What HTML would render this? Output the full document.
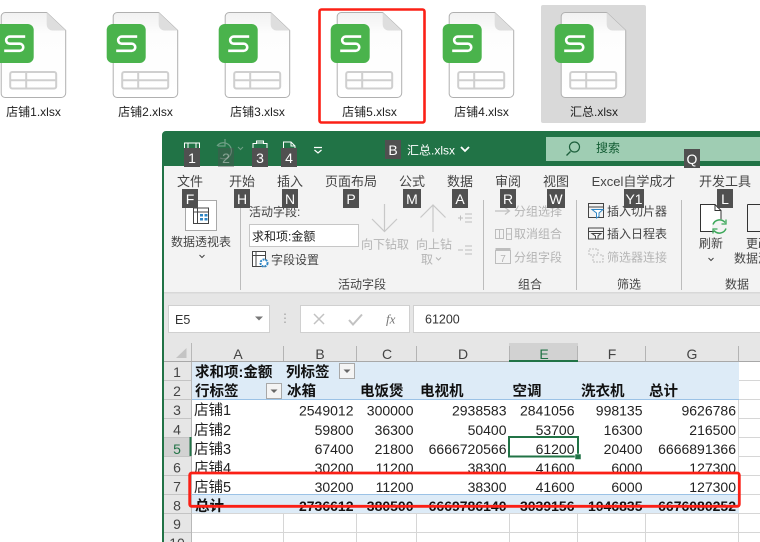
<!DOCTYPE html>
<html><head><meta charset="utf-8"><style>
html,body{margin:0;padding:0;background:#fff;width:760px;height:542px;overflow:hidden}
svg{display:block;font-family:"Liberation Sans","Noto Sans CJK SC",sans-serif}
.f{font-size:12px;fill:#222;text-anchor:middle}
.t{font-size:13px;fill:#444;text-anchor:middle}
.r{font-size:12px;fill:#444}
.g{font-size:12px;fill:#b4b4b4}
.k{font-size:14px;fill:#fff;text-anchor:middle}
.h{font-size:14px;fill:#444;text-anchor:middle}
.c{font-size:14.5px;fill:#222}
.n{font-size:14px;fill:#222;text-anchor:end}
.b{font-size:14.5px;fill:#111;font-weight:bold}
.bn{font-size:14px;fill:#111;font-weight:bold;text-anchor:end}
</style></head><body>
<svg width="760" height="542" viewBox="0 0 760 542" xmlns="http://www.w3.org/2000/svg">
<defs>
<linearGradient id="dg" x1="0" y1="0" x2="0" y2="1"><stop offset="0" stop-color="#f1f1f1"/><stop offset=".25" stop-color="#fdfdfd"/><stop offset="1" stop-color="#fff"/></linearGradient>
<symbol id="doc" overflow="visible" width="65" height="86" viewBox="0 0 65 86">
<path d="M4.500.5H46L65 18.500V81a4.500 4.500 0 0 1-4.500 4.500H4.500A4 4 0 0 1 .5 81V4.500A4 4 0 0 1 4.500.5Z" fill="url(#dg)" stroke="#b0b0b0" stroke-width="1"/>
<path d="M46 .5L65 18.500H52a6 6 0 0 1-6-6Z" fill="#dedede"/>
<rect x="9.500" y="60" width="46" height="16.500" rx="2" fill="none" stroke="#cfcfcf" stroke-width="2"/>
<path d="M9.500 68.300H55.500M25.500 60V76.500" stroke="#cfcfcf" stroke-width="2" fill="none"/>
<rect x="-6" y="12" width="39" height="39" rx="6" fill="#4ab34c"/>
<path d="M24.500 24.600H9a3.550 3.550 0 0 0 0 7.100H19a3.550 3.550 0 0 1 0 7.100H3.500" fill="none" stroke="#fff" stroke-width="2.600"/>
</symbol>
</defs>

<rect width="760" height="542" fill="#fff"/>
<rect x="541" y="5" width="105" height="118" rx="2" fill="#d9d9d9"/>
<use href="#doc" x="0.700" y="12" width="65" height="86"/>
<use href="#doc" x="112.700" y="12" width="65" height="86"/>
<use href="#doc" x="224.700" y="12" width="65" height="86"/>
<use href="#doc" x="336.700" y="12" width="65" height="86"/>
<use href="#doc" x="448.700" y="12" width="65" height="86"/>
<use href="#doc" x="560.700" y="12" width="65" height="86"/>
<text class="f" x="33.500" y="116">店铺1.xlsx</text>
<text class="f" x="145.500" y="116">店铺2.xlsx</text>
<text class="f" x="257.500" y="116">店铺3.xlsx</text>
<text class="f" x="369.500" y="116">店铺5.xlsx</text>
<text class="f" x="481.500" y="116">店铺4.xlsx</text>
<text class="f" x="594" y="116">汇总.xlsx</text>

<!-- window -->
<path d="M162 542V135a4 4 0 0 1 4-4H760V542Z" fill="#fff"/>
<path d="M162 542V135a4 4 0 0 1 4-4H760V167H164V542Z" fill="#217346"/>
<rect x="164" y="166" width="596" height="127" fill="#f3f3f3"/>
<rect x="164" y="293" width="596" height="50" fill="#e6e6e6"/>
<rect x="164" y="292" width="596" height="1.500" fill="#d8d8d8"/>

<!-- QAT -->
<path d="M184.500 148V143H199.500V148M188 143V148M196 143V148" fill="none" stroke="#fff"/>
<path d="M217 146a8 8 0 1 1 3 12M225 139V146H218" fill="none" stroke="#6f9f86" stroke-width="1.200"/>
<path d="M238 147l2.500 2.500 2.500-2.500" fill="none" stroke="#6f9f86"/>
<path d="M253 148V143.500H256.500V143H263.500V143.500H267V148M256.500 143V141H263.500V143" fill="none" stroke="#fff"/>
<path d="M283.500 148V142H291L295 146V148M291 142V146H295" fill="none" stroke="#fff"/>
<path d="M314 147.500H322M314.500 150l3.500 3 3.500-3" fill="none" stroke="#fff" stroke-width="1.200"/>

<text x="407" y="154.500" font-size="12" fill="#fff">汇总.xlsx</text>
<path d="M461 147l4 4 4-4" fill="none" stroke="#fff" stroke-width="1.800"/>
<rect x="546" y="137" width="214" height="24" fill="#9fcdb3"/>
<circle cx="574.500" cy="147" r="5" fill="none" stroke="#1d5f3c" stroke-width="1.200"/>
<path d="M570.500 151.500L566.500 155.500" stroke="#1d5f3c" stroke-width="1.300"/>
<text x="596" y="152" font-size="12" fill="#125c33">搜索</text>

<!-- Tabs -->
<text class="t" x="190" y="186">文件</text>
<text class="t" x="242" y="186">开始</text>
<text class="t" x="290" y="186">插入</text>
<text class="t" x="351" y="186">页面布局</text>
<text class="t" x="412" y="186">公式</text>
<text class="t" x="460" y="186">数据</text>
<text class="t" x="508" y="186">审阅</text>
<text class="t" x="556" y="186">视图</text>
<text class="t" x="633.500" y="186">Excel自学成才</text>
<text class="t" x="725" y="186">开发工具</text>

<!-- Ribbon: pivot -->
<rect x="185.500" y="200.500" width="31" height="30" fill="#fff" stroke="#a8a8a8"/>
<rect x="193.500" y="208" width="15" height="15.500" fill="#fff" stroke="#444"/>
<path d="M193.500 212H208.500M197.500 208V223.500" stroke="#444" fill="none"/>
<rect x="200" y="214" width="3" height="2.500" fill="#2f86c5"/><rect x="204.500" y="214" width="3" height="2.500" fill="#2f86c5"/><rect x="200" y="218" width="3" height="2.500" fill="#2f86c5"/><rect x="204.500" y="218" width="3" height="2.500" fill="#2f86c5"/>
<text class="r" x="171" y="246">数据透视表</text>
<path d="M199.500 255l2.500 2.500 2.500-2.500" fill="none" stroke="#444"/>
<path d="M240.500 200V290M483.500 200V290M576.500 200V290M681.500 200V290" stroke="#bcbcbc" fill="none"/>

<text class="r" x="249" y="216" fill="#555">活动字段:</text>
<rect x="249.500" y="224.500" width="109" height="22" fill="#fff" stroke="#c6c6c6"/>
<text x="252" y="240.500" font-size="12" fill="#222">求和项:金额</text>
<rect x="252.500" y="251.500" width="13" height="15" fill="#fff" stroke="#444"/>
<path d="M252.500 255.500H265.500M256 251.500V266.500" stroke="#444" fill="none"/>
<circle cx="264" cy="263" r="3.500" fill="#fff" stroke="#2f86c5" stroke-width="2" stroke-dasharray="2 1"/>
<text class="r" x="271" y="264">字段设置</text>

<path d="M384.500 204V231M372 219L384.500 231.500L397 219" fill="none" stroke="#c8c8c8" stroke-width="1.200"/>
<path d="M433 232V205M420.500 217.500L433 205L445.500 217.500" fill="none" stroke="#c8c8c8" stroke-width="1.200"/>
<text class="g" x="361" y="248.500">向下钻取</text>
<text class="g" x="416" y="248.500">向上钻</text>
<text class="g" x="421" y="263.500">取</text>
<path d="M436 257.500l2.500 2.500 2.500-2.500" fill="none" stroke="#b4b4b4"/>
<path d="M458 218H463M460.500 215.500V220.500M465 214H472M465 218H472M465 222H472M458 250H463M465 246H472M465 250H472M465 254H472" stroke="#bdbdbd" fill="none"/>
<text class="r" x="338" y="288.500">活动字段</text>

<!-- group -->
<path d="M495 211H509M505 207.500L509.500 211L505 214.500" fill="none" stroke="#c0c0c0" stroke-width="1.200"/>
<text class="g" x="514" y="215.500">分组选择</text>
<path d="M495.500 229.500H503.500V238.500H495.500ZM506.500 228.500H511.500V239.500H506.500ZM506.500 234H511.500M499.500 229.500V238.500" fill="none" stroke="#bdbdbd"/>
<text class="g" x="514" y="238">取消组合</text>
<rect x="495.500" y="250.500" width="15" height="13" fill="none" stroke="#bdbdbd"/>
<path d="M495.500 249H510.500" stroke="#bdbdbd" stroke-width="2"/>
<text x="503" y="262" font-size="10" fill="#b4b4b4" text-anchor="middle">7</text>
<text class="g" x="514" y="261.500">分组字段</text>
<text class="r" x="518" y="288.500">组合</text>

<!-- filter -->
<path d="M588.500 203.500H603.500V217.500H588.500ZM588.500 207H603.500" fill="none" stroke="#444"/>
<path d="M592 209.500H603L599 213V216.500L596.500 218V213Z" fill="#fff" stroke="#2f86c5"/>
<text class="r" x="607" y="215.500">插入切片器</text>
<path d="M588.500 228H603.500V239H588.500ZM588.500 231.500H603.500" fill="none" stroke="#444"/>
<path d="M592 233.500H601L598 236V239H595.500V236Z" fill="#fff" stroke="#444"/>
<text class="r" x="607" y="238">插入日程表</text>
<path d="M589 249H598V255H589ZM593 256V262H603V255H599" fill="none" stroke="#bdbdbd" stroke-dasharray="2 1"/>
<text class="g" x="607" y="261.500">筛选器连接</text>
<text class="r" x="617" y="288.500">筛选</text>

<!-- data -->
<path d="M700.500 204.500H715L721 210.500V231.500H700.500Z" fill="#fff" stroke="#333"/>
<path d="M715 204.500V210.500H721" fill="none" stroke="#333"/>
<circle cx="719.500" cy="226.500" r="7.500" fill="#f3f3f3"/>
<path d="M713 224.500A7 7 0 0 1 725 222.500M726 228.500A7 7 0 0 1 714 230.500" fill="none" stroke="#3da85a" stroke-width="1.500"/>
<path d="M726 219.500V224H721.500M713 233.500V229H717.500" fill="none" stroke="#3da85a" stroke-width="1.300"/>
<text class="r" x="699" y="247.500">刷新</text>
<path d="M708.500 258l2.500 2.500 2.500-2.500" fill="none" stroke="#444"/>
<path d="M747.500 204.500H760M747.500 204.500V231.500H760" fill="none" stroke="#333"/>
<text class="r" x="746" y="247.500">更改</text>
<text class="r" x="734" y="262.500">数据源</text>
<text class="r" x="725" y="288.500">数据</text>

<!-- formula bar -->
<rect x="168.500" y="305.500" width="101" height="27" fill="#fff" stroke="#d0d0d0"/>
<text x="175" y="324" font-size="12.500" fill="#333">E5</text>
<path d="M255 316.500H263L259 320.500Z" fill="#777"/>
<path d="M285 313.500V315M285 317.500V319M285 321.500V323" stroke="#aaa" stroke-width="1.500" fill="none"/>
<rect x="300.500" y="305.500" width="109" height="27" fill="#fff" stroke="#d0d0d0"/>
<path d="M314 314L324 324M324 314L314 324" stroke="#c2c2c2" stroke-width="1.500" fill="none"/>
<path d="M349 320L353 324.500L362 314.500" stroke="#c2c2c2" stroke-width="2" fill="none"/>
<text x="386" y="323.500" font-family="Liberation Serif,serif" font-style="italic" font-size="13" fill="#777">fx</text>
<rect x="413.500" y="305.500" width="350" height="27" fill="#fff" stroke="#d0d0d0"/>
<text x="425" y="323.500" font-size="12.500" fill="#333">61200</text>

<!-- sheet -->
<rect x="164" y="343" width="596" height="199" fill="#fff"/>
<rect x="164" y="343" width="596" height="19" fill="#e6e6e6"/>
<rect x="509" y="343" width="69" height="17" fill="#d2d2d2"/>
<path d="M186.500 348V358H176Z" fill="#c4c4c4"/>
<path d="M191.500 343V542" stroke="#b8b8b8" fill="none"/>
<rect x="164" y="362" width="27" height="180" fill="#e6e6e6"/>
<rect x="164" y="437" width="27" height="19" fill="#d2d2d2"/>
<path d="M283.500 346V361M356.500 346V361M416.500 346V361M509.500 346V361M577.500 346V361M645.500 346V361M738.500 346V361" stroke="#b4b4b4" fill="none"/>
<path d="M164 361.500H760" stroke="#a8a8a8" fill="none"/>
<path d="M164 380.500H191M164 399.500H191M164 418.500H191M164 437.500H191M164 456.500H191M164 475.500H191M164 494.500H191M164 513.500H191M164 532.500H191" stroke="#c4c4c4" fill="none"/>
<path d="M739 380.500H760M739 399.500H760M739 418.500H760M739 437.500H760M739 456.500H760M739 475.500H760M739 494.500H760M739 513.500H760M739 532.500H760M192 532.500H760M192 513.500H760M283.500 513V542M356.500 513V542M416.500 513V542M509.500 513V542M577.500 513V542M645.500 513V542M738.500 362V542" stroke="#d6d6d6" fill="none"/>
<rect x="509" y="360" width="69" height="2" fill="#217346"/>
<rect x="189.500" y="437" width="2" height="19" fill="#217346"/>

<text class="h" x="238" y="359">A</text><text class="h" x="320" y="359">B</text><text class="h" x="387" y="359">C</text><text class="h" x="463" y="359">D</text><text class="h" x="544" y="359" style="fill:#217346">E</text><text class="h" x="612" y="359">F</text><text class="h" x="692" y="359">G</text>
<text class="h" x="177" y="377">1</text><text class="h" x="177" y="396">2</text><text class="h" x="177" y="415">3</text><text class="h" x="177" y="434.500">4</text><text class="h" x="177" y="454" style="fill:#217346">5</text><text class="h" x="177" y="472.500">6</text><text class="h" x="177" y="491.500">7</text><text class="h" x="177" y="510.500">8</text><text class="h" x="177" y="529">9</text><text class="h" x="177" y="548">10</text>

<rect x="192" y="362" width="547" height="37" fill="#ddebf7"/>
<path d="M192 399.500H739" stroke="#9bc2e6" fill="none"/>
<text class="b" x="195" y="377">求和项:金额</text>
<text class="b" x="286" y="377">列标签</text>
<rect x="339.500" y="363.500" width="15" height="15" fill="#f4f4f4" stroke="#a8a8a8"/>
<path d="M343.500 369.500H350.500L347 373Z" fill="#666"/>
<text class="b" x="195" y="396">行标签</text>
<rect x="266.500" y="383.500" width="15" height="15" fill="#f4f4f4" stroke="#a8a8a8"/>
<path d="M270.500 389.500H277.500L274 393Z" fill="#666"/>
<text class="b" x="287" y="396">冰箱</text>
<text class="b" x="360" y="396">电饭煲</text>
<text class="b" x="420" y="396">电视机</text>
<text class="b" x="512.500" y="396">空调</text>
<text class="b" x="581" y="396">洗衣机</text>
<text class="b" x="649" y="396">总计</text>

<text class="c" x="194" y="415">店铺1</text>
<text class="n" x="353.500" y="415.500">2549012</text><text class="n" x="413.500" y="415.500">300000</text><text class="n" x="506.500" y="415.500">2938583</text><text class="n" x="574.500" y="415.500">2841056</text><text class="n" x="642.500" y="415.500">998135</text><text class="n" x="736" y="415.500">9626786</text>
<text class="c" x="194" y="435">店铺2</text>
<text class="n" x="353.500" y="435">59800</text><text class="n" x="413.500" y="435">36300</text><text class="n" x="506.500" y="435">50400</text><text class="n" x="574.500" y="435">53700</text><text class="n" x="642.500" y="435">16300</text><text class="n" x="736" y="435">216500</text>
<text class="c" x="194" y="454">店铺3</text>
<text class="n" x="353.500" y="454">67400</text><text class="n" x="413.500" y="454">21800</text><text class="n" x="506.500" y="454">6666720566</text><text class="n" x="574.500" y="454">61200</text><text class="n" x="642.500" y="454">20400</text><text class="n" x="736" y="454">6666891366</text>
<text class="c" x="194" y="473">店铺4</text>
<text class="n" x="353.500" y="473">30200</text><text class="n" x="413.500" y="473">11200</text><text class="n" x="506.500" y="473">38300</text><text class="n" x="574.500" y="473">41600</text><text class="n" x="642.500" y="473">6000</text><text class="n" x="736" y="473">127300</text>
<rect x="192" y="474" width="547" height="20" fill="#fff"/>
<text class="c" x="194" y="492">店铺5</text>
<text class="n" x="353.500" y="492">30200</text><text class="n" x="413.500" y="492">11200</text><text class="n" x="506.500" y="492">38300</text><text class="n" x="574.500" y="492">41600</text><text class="n" x="642.500" y="492">6000</text><text class="n" x="736" y="492">127300</text>

<rect x="192" y="494" width="547" height="19" fill="#ddebf7"/>
<path d="M192 494.500H739" stroke="#9bc2e6" fill="none"/>
<text class="b" x="195" y="511">总计</text>
<text class="bn" x="353.500" y="511">2736612</text><text class="bn" x="413.500" y="511">380500</text><text class="bn" x="506.500" y="511">6669786140</text><text class="bn" x="574.500" y="511">3039156</text><text class="bn" x="642.500" y="511">1046835</text><text class="bn" x="736" y="511">6676080252</text>

<!-- selection -->
<rect x="509" y="437" width="69" height="19.500" fill="none" stroke="#217346" stroke-width="2"/>
<rect x="575" y="454" width="6" height="5.500" fill="#217346" stroke="#fff" stroke-width=".5"/>

<!-- keytips -->
<g fill="#505050">
<rect x="184" y="148" width="16" height="19"/><rect x="218" y="148" width="16" height="19" opacity=".4"/><rect x="252" y="148" width="16" height="19"/><rect x="281" y="148" width="16" height="19"/>
<rect x="385" y="140" width="16" height="19"/><rect x="684" y="149" width="16" height="19"/>
<rect x="182" y="189" width="16" height="19"/><rect x="234" y="189" width="16" height="19"/><rect x="282" y="189" width="16" height="19"/><rect x="343" y="189" width="16" height="19"/><rect x="403" y="189" width="18" height="19"/><rect x="452" y="189" width="16" height="19"/><rect x="500" y="189" width="16" height="19"/><rect x="547" y="189" width="18" height="19"/><rect x="624" y="189" width="20" height="19"/><rect x="717" y="189" width="16" height="19"/>
</g>
<text class="k" x="192" y="163">1</text><text class="k" x="226" y="163" opacity=".4">2</text><text class="k" x="260" y="163">3</text><text class="k" x="289" y="163">4</text><text class="k" x="393" y="155">B</text><text class="k" x="692" y="164">Q</text>
<text class="k" x="190" y="204">F</text><text class="k" x="242" y="204">H</text><text class="k" x="290" y="204">N</text><text class="k" x="351" y="204">P</text><text class="k" x="412" y="204">M</text><text class="k" x="460" y="204">A</text><text class="k" x="508" y="204">R</text><text class="k" x="556" y="204">W</text><text class="k" x="634" y="204">Y1</text><text class="k" x="725" y="204">L</text>

<!-- red annotations -->
<rect x="319.500" y="9.500" width="105" height="113" rx="2" fill="none" stroke="#fb2016" stroke-width="2.600"/>
<rect x="189.700" y="473" width="549.600" height="33.300" rx="2" fill="none" stroke="#fb2016" stroke-width="2.800"/>
</svg>
</body></html>
